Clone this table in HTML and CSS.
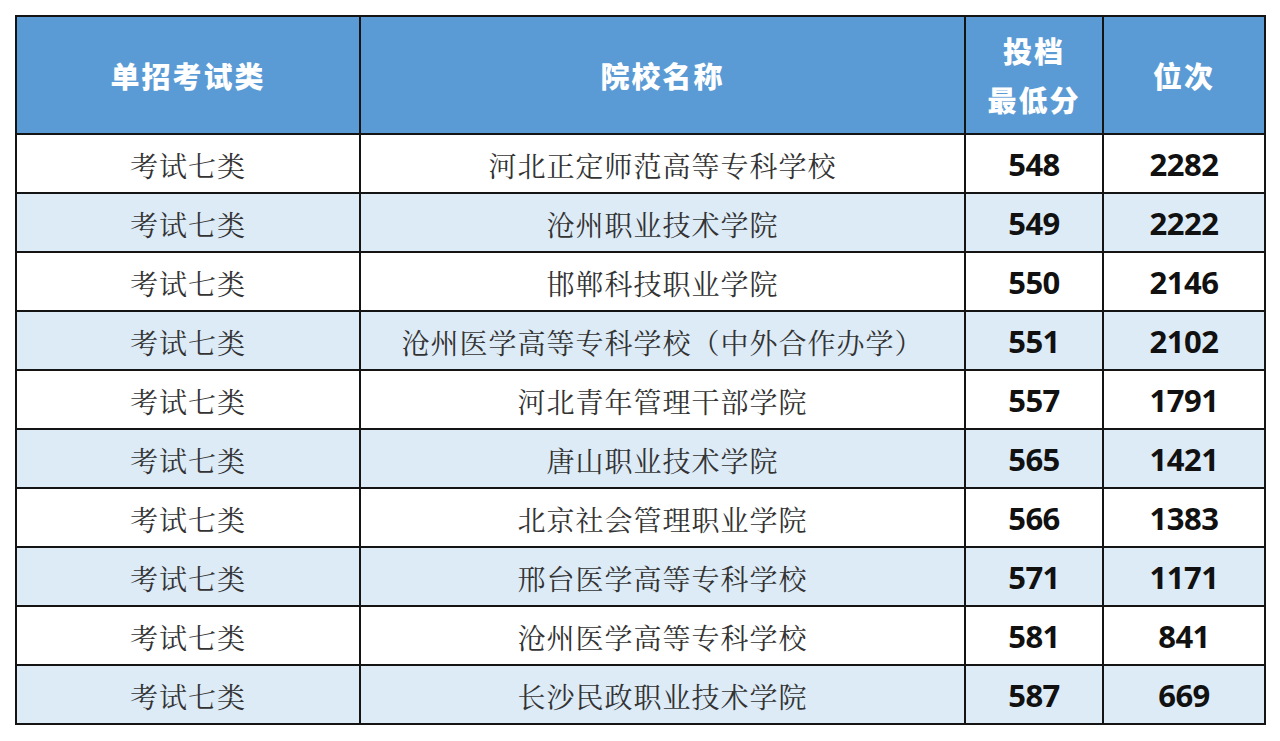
FILE: index.html
```html
<!DOCTYPE html>
<html lang="zh">
<head>
<meta charset="utf-8">
<link rel="stylesheet" href="styles.css">
</head>
<body>
<table class="score-table">
  <colgroup>
    <col class="c1"><col class="c2"><col class="c3"><col class="c4">
  </colgroup>
  <thead>
    <tr>
      <th>单招考试类</th>
      <th>院校名称</th>
      <th class="two">投档<br>最低分</th>
      <th>位次</th>
    </tr>
  </thead>
  <tbody>
    <tr><td>考试七类</td><td>河北正定师范高等专科学校</td><td class="num">548</td><td class="num">2282</td></tr>
    <tr class="alt"><td>考试七类</td><td>沧州职业技术学院</td><td class="num">549</td><td class="num">2222</td></tr>
    <tr><td>考试七类</td><td>邯郸科技职业学院</td><td class="num">550</td><td class="num">2146</td></tr>
    <tr class="alt"><td>考试七类</td><td>沧州医学高等专科学校（中外合作办学）</td><td class="num">551</td><td class="num">2102</td></tr>
    <tr><td>考试七类</td><td>河北青年管理干部学院</td><td class="num">557</td><td class="num">1791</td></tr>
    <tr class="alt"><td>考试七类</td><td>唐山职业技术学院</td><td class="num">565</td><td class="num">1421</td></tr>
    <tr><td>考试七类</td><td>北京社会管理职业学院</td><td class="num">566</td><td class="num">1383</td></tr>
    <tr class="alt"><td>考试七类</td><td>邢台医学高等专科学校</td><td class="num">571</td><td class="num">1171</td></tr>
    <tr><td>考试七类</td><td>沧州医学高等专科学校</td><td class="num">581</td><td class="num">841</td></tr>
    <tr class="alt"><td>考试七类</td><td>长沙民政职业技术学院</td><td class="num">587</td><td class="num">669</td></tr>
  </tbody>
</table>
</body>
</html>
```

FILE: styles.css
```css
html, body {
  margin: 0;
  padding: 0;
  background: #ffffff;
}
body {
  padding: 15px 0 0 15px;
}
.score-table {
  border-collapse: collapse;
  table-layout: fixed;
  width: 1249px;
}
.c1 { width: 344px; }
.c2 { width: 605px; }
.c3 { width: 138px; }
.c4 { width: 162px; }
.score-table th,
.score-table td {
  border: 2px solid #141414;
  text-align: center;
  padding: 0;
}
.score-table th {
  background: #5b9bd5;
  color: #ffffff;
  font-family: "Noto Sans CJK SC", sans-serif;
  font-weight: 900;
  font-size: 29px;
  letter-spacing: 2px;
  height: 116px;
  line-height: 49px;
}
.score-table td {
  height: 54px;
  padding-top: 3px;
  font-family: "Noto Serif CJK SC", "Noto Sans CJK SC", serif;
  font-size: 28px;
  color: #333333;
  letter-spacing: 1px;
}
.score-table tr.alt td {
  background: #ddebf7;
}
.score-table td.num {
  height: 57px;
  padding-top: 0;
  font-family: "Open Sans", "Liberation Sans", sans-serif;
  font-weight: 700;
  font-size: 31px;
  color: #111111;
  letter-spacing: -0.5px;
}
```
